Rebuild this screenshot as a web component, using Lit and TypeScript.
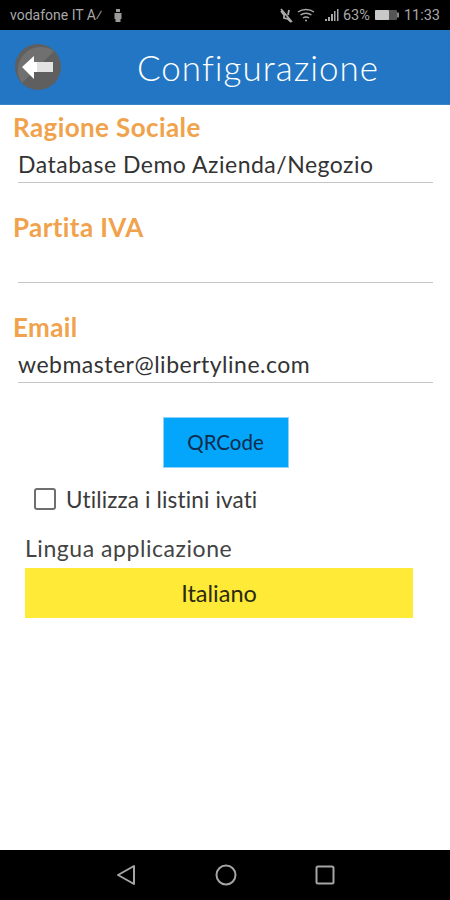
import { LitElement, css, html } from 'lit'
import { customElement } from 'lit/decorators.js'

interface Field {
   label: string
   value: string
}

const fields: Field[] = [
   { label: 'Ragione Sociale', value: 'Database Demo Azienda/Negozio' },
   { label: 'Partita IVA', value: '' },
   { label: 'Email', value: 'webmaster@libertyline.com' }
]

const genField = (f: Field) => html`
   <section class="field">
      <h2 class="label">${f.label}</h2>
      <div class="value">${f.value}</div>
   </section>
`

@customElement('app-root')
export class AppRoot extends LitElement {

   render() {
      return html`
         <div class="phone">
            <div class="status">
               <div class="status-left">
                  <span>vodafone IT</span>
                  <span class="carrier">A⁄</span>
                  <svg width="10" height="15" viewBox="0 0 10 15"><path d="M3 1h4v3h-4zM1.500 5h7v6h-1v3h-5v-3h-1z" fill="#9a9a9a"/></svg>
               </div>
               <div class="status-right">
                  <svg width="15" height="15" viewBox="0 0 15 15" fill="none" stroke="#a8a8a8" stroke-width="1.800"><path d="M2 1l11 13M2 3l3 4v3l4 1 3 3M10 2l-1 5"/></svg>
                  <svg class="wifi" width="18" height="15" viewBox="0 0 18 15" fill="none" stroke="#a8a8a8" stroke-width="1.500"><path d="M1 4c4.500-3.500 11.500-3.500 16 0M3.500 7c3-2.300 8-2.300 11 0M6 10c1.800-1.200 4.200-1.200 6 0"/><circle cx="9" cy="12.500" r="1" fill="#a8a8a8" stroke="none"/></svg>
                  <svg class="signal" width="15" height="13" viewBox="0 0 15 13" fill="#a8a8a8"><path d="M0 10h2v2h-2zM3 8h2v4h-2zM6 5h2v7h-2zM9 2h1.500v10h-1.500zM12 0h1.500v12h-1.500z"/></svg>
                  <span class="pct">63%</span>
                  <svg class="batt" width="25" height="12" viewBox="0 0 25 12"><rect x="0" y="1" width="22" height="10" rx="1" fill="#555"/><rect x="0" y="1" width="14" height="10" rx="1" fill="#c8c8c8"/><rect x="22" y="3.500" width="2" height="5" fill="#888"/></svg>
                  <span class="time">11:33</span>
               </div>
            </div>

            <header class="bar">
               <button class="back" aria-label="Indietro">
                  <svg width="46" height="46" viewBox="0 0 46 46">
                     <circle cx="23" cy="23" r="23" fill="#5f5f5f"/>
                     <path d="M7 39A23 23 0 0 1 39 7z" fill="#707070"/>
                     <path d="M7 23l12-11v6h19v10h-19v7z" fill="#fff"/>
                     <path d="M22 18h16v10h-16z" fill="#e2e2e2"/>
                  </svg>
               </button>
               <h1 class="title">Configurazione</h1>
            </header>

            <main class="form">
               ${fields.map(f => genField(f))}
               <div class="qr-row"><button class="qr">QRCode</button></div>
               <label class="check">
                  <span class="box"></span>
                  <span>Utilizza i listini ivati</span>
               </label>
               <div class="lang">
                  <div class="lang-label">Lingua applicazione</div>
                  <div class="select">Italiano</div>
               </div>
            </main>

            <nav class="nav">
               <svg width="20" height="22" viewBox="0 0 20 22" fill="none" stroke="#a5a5a5" stroke-width="2" stroke-linejoin="round"><path d="M18 2v18L2 11z"/></svg>
               <svg width="22" height="22" viewBox="0 0 22 22" fill="none" stroke="#a5a5a5" stroke-width="2"><circle cx="11" cy="11" r="9.500"/></svg>
               <svg width="20" height="20" viewBox="0 0 20 20" fill="none" stroke="#a5a5a5" stroke-width="2"><rect x="1.500" y="1.500" width="17" height="17" rx="1.500"/></svg>
            </nav>
         </div>
      `
   }

   static styles = css`
   :host {
      display: block;
      font-family: "Lato", "Open Sans", "Liberation Sans", sans-serif;
   }
   * {
      box-sizing: border-box;
      margin: 0;
      padding: 0;
   }
   .phone {
      display: flex;
      flex-direction: column;
      width: 450px;
      height: 900px;
      background: #fff;
   }
   .status {
      flex: 0 0 30px;
      display: flex;
      align-items: center;
      justify-content: space-between;
      padding: 0 10px;
      background: #000;
      color: #a8a8a8;
      font-family: "Roboto", sans-serif;
      font-size: 14px;
   }
   .status-left, .status-right {
      display: flex;
      align-items: center;
   }
   .status-left {
      gap: 3px;
   }
   .carrier {
      margin-right: 8px;
   }
   .wifi {
      margin-left: 3px;
   }
   .signal {
      margin-left: 10px;
   }
   .pct {
      margin-left: 3px;
      font-size: 14.500px;
   }
   .batt {
      margin-left: 5px;
   }
   .time {
      margin-left: 4px;
      font-size: 14.500px;
   }
   .bar {
      flex: 0 0 75px;
      display: flex;
      align-items: center;
      padding-left: 15px;
      background: #2276c3;
      border-bottom: 1px solid #3a84c8;
   }
   .back {
      display: flex;
      flex: 0 0 46px;
      border: 0;
      background: none;
   }
   .title {
      flex: 1;
      padding-left: 5px;
      text-align: center;
      color: #fff;
      font-size: 35px;
      font-weight: 300;
      letter-spacing: 1px;
   }
   .form {
      flex: 1;
      display: flex;
      flex-direction: column;
   }
   .field {
      height: 100px;
      padding: 7px 17px 0 13px;
   }
   .label {
      height: 30px;
      color: #f0a24c;
      font-size: 26px;
      line-height: 30px;
      font-weight: 700;
      letter-spacing: 0.4px;
   }
   .value {
      height: 41px;
      margin: 0 0 0 5px;
      padding-top: 7px;
      border-bottom: 1px solid #c4c4c4;
      color: #333;
      font-size: 23px;
      line-height: 31px;
      letter-spacing: 0.5px;
      white-space: nowrap;
   }
   .qr-row {
      display: flex;
      justify-content: center;
      margin-top: 12px;
      padding-left: 1px;
   }
   .qr {
      width: 126px;
      height: 51px;
      padding-bottom: 2px;
      border: 1px solid #8fd3fb;
      background: #03a6fb;
      color: #0e2c4c;
      font: inherit;
      font-size: 20.500px;
   }
   .check {
      display: flex;
      align-items: center;
      gap: 10px;
      margin: 15px 0 0 34px;
      height: 32px;
      color: #3a3a3a;
      font-size: 22.500px;
      letter-spacing: 0.15px;
   }
   .box {
      flex: 0 0 22px;
      height: 22px;
      border: 2px solid #6f6f6f;
      border-radius: 3px;
   }
   .lang {
      margin: 17px 37px 0 25px;
   }
   .lang-label {
      height: 36px;
      color: #444;
      font-size: 23px;
      line-height: 32px;
      letter-spacing: 0.55px;
   }
   .select {
      height: 50px;
      background: #ffeb37;
      color: #2a2a12;
      font-size: 23.500px;
      line-height: 50px;
      text-align: center;
   }
   .nav {
      flex: 0 0 50px;
      display: flex;
      align-items: center;
      justify-content: space-between;
      padding: 0 115px 0 116px;
      background: #000;
   }
   `
}

declare global {
   interface HTMLElementTagNameMap {
      'app-root': AppRoot
   }
}
